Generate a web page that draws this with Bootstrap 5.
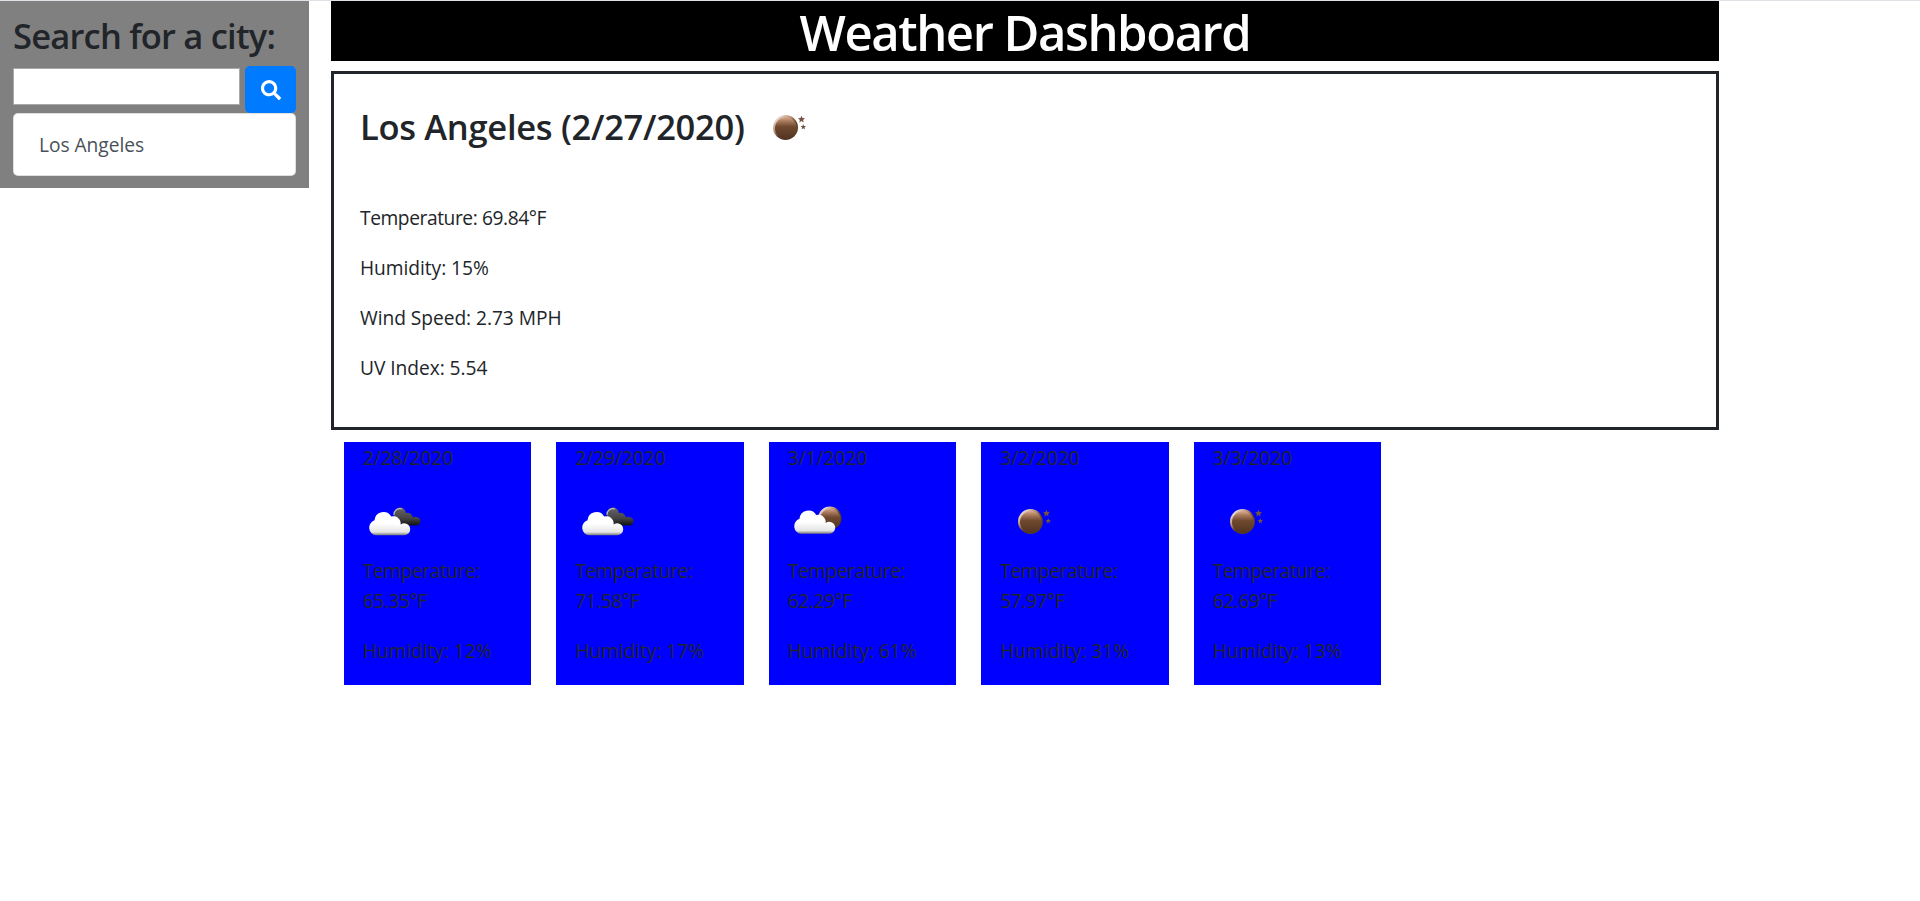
<!DOCTYPE html>
<html lang="en">
<head>
<meta charset="utf-8">
<meta name="viewport" content="width=device-width, initial-scale=1">
<title>Weather Dashboard</title>
<link rel="stylesheet" href="https://cdn.jsdelivr.net/npm/bootstrap@5.3.0/dist/css/bootstrap.min.css">
<style>
html{font-size:20px}
body{font-family:"Open Sans","Noto Sans",sans-serif;color:#212529;background:#fff;border-top:1px solid #dee1e6;font-size:19.2px;line-height:30px;letter-spacing:-.05px}
.page-title,.sidebar .h3,.current .h3{font-weight:600}
.sidebar{width:309px;height:187px;background:gray;padding:12.5px 13px}
.sidebar .h3,.current .h3{font-size:34.5px;line-height:44px}
.sidebar .h3{letter-spacing:-.8px;height:42px;white-space:nowrap}
.city-input{width:227px;height:37px;border:1px solid #a9a9a9;margin-top:2px}
.btn-search{width:51px;height:47px;background:#007bff;border-radius:5px;padding:2px 0 0 1px}
.history{height:63px;border-radius:5px;--bs-list-group-border-color:rgba(0,0,0,.125)}
.history .list-group-item{padding:16px 25px;height:63px;color:#495057}
.main-col{width:1388px;margin-left:22px}
.page-title{background:#000;height:60px;font-size:49px;line-height:60px;padding-top:1px;letter-spacing:-1.45px}
.current{height:359px;border:3px solid #212529;padding:25px}
.current .h3{height:62.5px;line-height:55px;margin-bottom:41.5px;letter-spacing:-.3px}
.wicon{width:62.5px;height:62.5px;display:block}
.current .name{width:396px;padding-left:1px;white-space:nowrap}
.current p{padding-left:1px}
.temp{letter-spacing:-.42px}
.days{gap:25px;margin:12px 0 0 12.5px}
.day{width:187.5px;height:243px;background:#00f;padding:1px 18px 0 19.25px}
.day .wicon{margin-top:19.5px;margin-left:-.5px;margin-bottom:1px}
</style>
</head>
<body>
<svg width="0" height="0" class="position-absolute" aria-hidden="true">
  <defs>
    <linearGradient id="brown" x1="0" y1="0" x2="0" y2="1"><stop offset="0" stop-color="#d9a88c"/><stop offset=".2" stop-color="#a37658"/><stop offset=".42" stop-color="#70492f"/><stop offset="1" stop-color="#503422"/></linearGradient>
    <linearGradient id="rim" x1=".1" y1="0" x2=".7" y2=".7"><stop offset="0" stop-color="#fff"/><stop offset=".5" stop-color="#b98c70"/><stop offset=".8" stop-color="#593a27"/></linearGradient>
    <linearGradient id="white" x1="0" y1="0" x2="0" y2="1"><stop offset=".5" stop-color="#fff"/><stop offset=".86" stop-color="#e4e4e4"/><stop offset="1" stop-color="#777"/></linearGradient>
    <linearGradient id="dark" x1="0" y1="0" x2="0" y2="1"><stop offset="0" stop-color="#666"/><stop offset=".6" stop-color="#444"/><stop offset="1" stop-color="#111"/></linearGradient>
    <path id="cloud" d="M8 24.500a7.700 7.700 0 0 1-1.700-15A9 9 0 0 1 23 5.600a7.600 7.600 0 0 1 9.500 8a6 6 0 0 1 9.500 5a6.100 6.100 0 0 1-6 5.900z"/>
    <g id="orb"><circle cx="12.500" cy="12.500" r="12.500" fill="url(#rim)"/><circle cx="13" cy="13.300" r="11" fill="url(#brown)"/></g>
    <symbol id="clear" viewBox="0 0 62.5 62.5">
      <use href="#orb" transform="translate(18 16)"/>
      <path fill="#755343" transform="translate(3 .7)" d="M43.500 16l1 2.300 2.500.2-1.900 1.700.6 2.600-2.200-1.400-2.200 1.400.6-2.600-1.900-1.700 2.500-.2zM45.300 24.600l.8 1.700 1.900.1-1.500 1.300.5 2-1.700-1.100-1.700 1.100.5-2-1.500-1.300 1.900-.1z"/>
    </symbol>
    <symbol id="few" viewBox="0 0 62.5 62.5"><use href="#orb" transform="translate(31.200 13.500) scale(.93)"/><use href="#cloud" fill="url(#white)" x="6.200" y="16.300"/></symbol>
    <symbol id="broken" viewBox="0 0 62.5 62.5">
      <path fill="url(#dark)" d="M32 32V21a6 6 0 0 1 12-1 5.500 5.500 0 0 1 7 4.500 4 4 0 0 1 3.500-.5 4.200 4.200 0 0 1-.5 8.500z"/>
      <path fill="none" stroke="#bbb" stroke-width="1.200" d="M32 22a6 6 0 0 1 8-6"/>
      <use href="#cloud" fill="url(#white)" x="6.200" y="17.800"/>
    </symbol>
  </defs>
</svg>
<div class="d-flex align-items-start">
  <aside class="sidebar">
    <h2 class="h3 mb-2">Search for a city:</h2>
    <form class="d-flex justify-content-between align-items-start">
      <input class="city-input" type="text" aria-label="City">
      <button class="btn btn-primary border-0 btn-search d-flex align-items-center justify-content-center" type="button" aria-label="Search">
        <svg width="20" height="20" viewBox="0 0 512 512" fill="#fff"><path d="M505 442.700L405.300 343c-4.500-4.500-10.600-7-17-7H372c27.600-35.300 44-79.700 44-128C416 93.100 322.900 0 208 0S0 93.100 0 208s93.100 208 208 208c48.300 0 92.700-16.400 128-44v16.300c0 6.400 2.500 12.500 7 17l99.700 99.700c9.400 9.400 24.600 9.400 33.900 0l28.300-28.300c9.400-9.400 9.400-24.600.1-34zM208 336c-70.700 0-128-57.200-128-128 0-70.700 57.200-128 128-128 70.700 0 128 57.200 128 128 0 70.700-57.200 128-128 128z"/></svg>
      </button>
    </form>
    <ul class="list-group history"><li class="list-group-item">Los Angeles</li></ul>
  </aside>
  <main class="main-col">
    <h1 class="page-title text-white text-center mb-2">Weather Dashboard</h1>
    <section class="current">
      <h2 class="h3 d-flex"><span class="name">Los Angeles (2/27/2020)</span><svg class="wicon"><use href="#clear"/></svg></h2>
      <p class="temp">Temperature: 69.84°F</p>
      <p>Humidity: 15%</p>
      <p>Wind Speed: 2.73 MPH</p>
      <p class="mb-0">UV Index: 5.54</p>
    </section>
    <section class="days d-flex">
      <div class="day"><div>2/28/2020</div><svg class="wicon"><use href="#broken"/></svg><p class="temp">Temperature: 65.35°F</p><p class="mb-0">Humidity: 12%</p></div>
      <div class="day"><div>2/29/2020</div><svg class="wicon"><use href="#broken"/></svg><p class="temp">Temperature: 71.58°F</p><p class="mb-0">Humidity: 17%</p></div>
      <div class="day"><div>3/1/2020</div><svg class="wicon"><use href="#few"/></svg><p class="temp">Temperature: 62.29°F</p><p class="mb-0">Humidity: 61%</p></div>
      <div class="day"><div>3/2/2020</div><svg class="wicon"><use href="#clear"/></svg><p class="temp">Temperature: 57.97°F</p><p class="mb-0">Humidity: 31%</p></div>
      <div class="day"><div>3/3/2020</div><svg class="wicon"><use href="#clear"/></svg><p class="temp">Temperature: 62.69°F</p><p class="mb-0">Humidity: 13%</p></div>
    </section>
  </main>
</div>
<script src="https://cdn.jsdelivr.net/npm/bootstrap@5.3.0/dist/js/bootstrap.bundle.min.js"></script>
</body>
</html>
